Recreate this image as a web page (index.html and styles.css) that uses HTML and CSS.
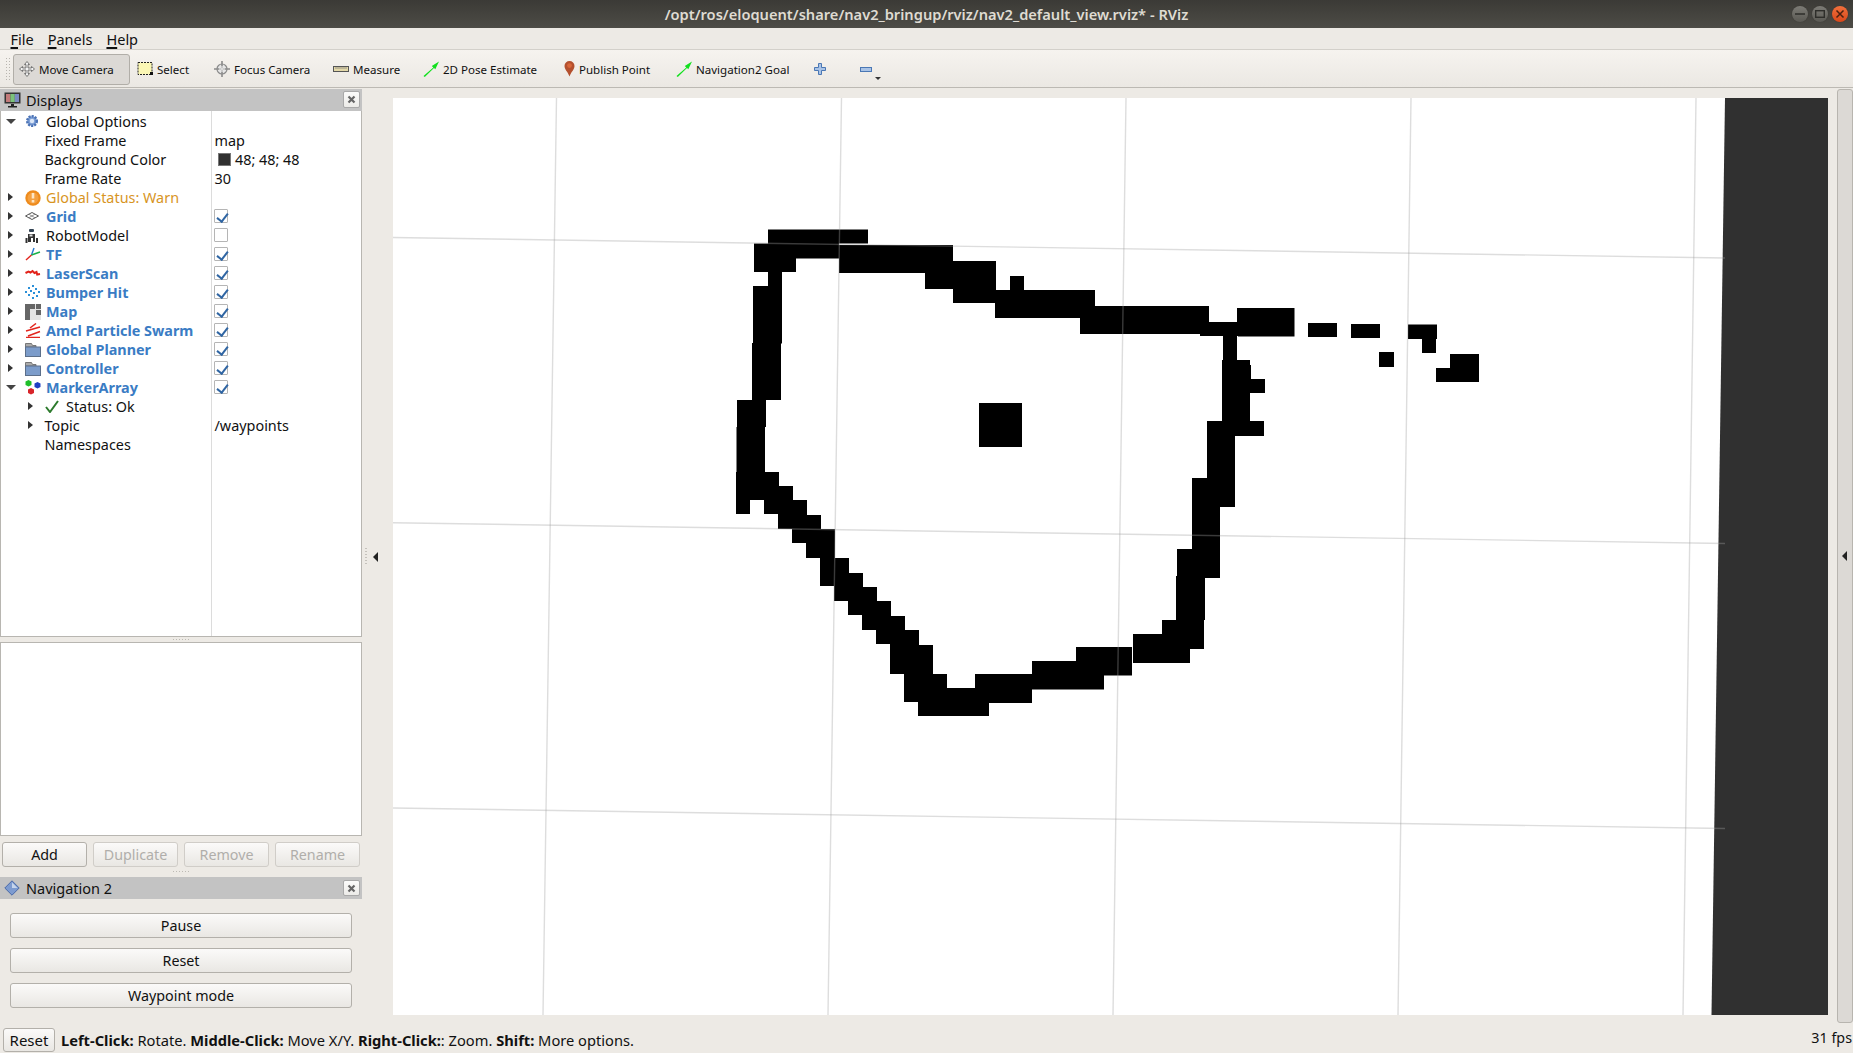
FILE: index.html
```html
<!DOCTYPE html>
<html lang="en">
<head>
<meta charset="utf-8">
<title>RViz</title>
<link rel="stylesheet" href="styles.css">
</head>
<body>
<div class="app">
  <header class="titlebar">
    <span class="title">/opt/ros/eloquent/share/nav2_bringup/rviz/nav2_default_view.rviz* - RViz</span>
    <div class="winbtns">
      <span class="winbtn"><svg width="10" height="10" viewBox="0 0 10 10"><path d="M0 5h10" stroke="#2e2e2a" stroke-width="1.5"/></svg></span>
      <span class="winbtn"><svg width="10" height="10" viewBox="0 0 10 10"><rect x=".7" y="1.7" width="8.6" height="6.6" fill="none" stroke="#2e2e2a" stroke-width="1.4"/></svg></span>
      <span class="winbtn close"><svg width="10" height="10" viewBox="0 0 10 10"><path d="M1.5 1.5l7 7M8.5 1.5l-7 7" stroke="#4a2010" stroke-width="1.5"/></svg></span>
    </div>
  </header>
  <nav class="menubar">
    <span class="menu"><u>F</u>ile</span>
    <span class="menu"><u>P</u>anels</span>
    <span class="menu"><u>H</u>elp</span>
  </nav>
  <div class="toolbar">
    <span class="grip"></span>
    <span class="tool active"><svg class="ti" width="16" height="16" viewBox="0 0 16 16"><path d="M8 .5l2.500 3H9v3.500h3.500V5.500l3 2.500-3 2.500V9H9v3.500h1.500L8 15.500l-2.500-3H7V9H3.500v1.500l-3-2.500 3-2.500V7H7V3.500H5.500z" fill="#f4f4f4" stroke="#6a6a6a" stroke-width=".9"/></svg>Move Camera</span>
    <span class="tool t-select"><svg class="ti" width="16" height="16" viewBox="0 0 16 16"><rect x="1" y="1.500" width="14" height="12" fill="#fbf7b5" stroke="#222" stroke-dasharray="2 1"/><rect x="13" y="11" width="3" height="3" fill="#111"/></svg>Select</span>
    <span class="tool t-focus"><svg class="ti" width="16" height="16" viewBox="0 0 16 16"><circle cx="8" cy="8" r="5" fill="#e6e6e6" stroke="#8a8a8a" stroke-width="1.200"/><path d="M8 0v16M0 8h16" stroke="#8a8a8a" stroke-width="1.600"/><path d="M8 5v6M5 8h6" stroke="#f4f4f4"/></svg>Focus Camera</span>
    <span class="tool t-measure"><svg class="ti" width="16" height="16" viewBox="0 0 16 16"><rect x=".5" y="5.500" width="15" height="5" fill="#e3d8a8" stroke="#555"/><path d="M3 6v2M5 6v2M7 6v2M9 6v2M11 6v2M13 6v2" stroke="#777" stroke-width=".7"/></svg>Measure</span>
    <span class="tool t-pose"><svg class="ti" width="16" height="16" viewBox="0 0 16 16"><path d="M.5 15L10.300 6.600 8.800 5 16 .5 12.300 8.200 11 6.900 1.800 16z" fill="#12e01e"/></svg>2D Pose Estimate</span>
    <span class="tool t-point"><svg class="ti" width="11" height="16" viewBox="0 0 11 16"><path d="M5.500 15.500C4 11 .5 8.500 .5 5a5 5 0 0 1 10 0c0 3.500-3.500 6-5 10.500z" fill="#b4502e"/><circle cx="5.500" cy="4.600" r="2.400" fill="#d9663a"/></svg>Publish Point</span>
    <span class="tool t-goal"><svg class="ti" width="16" height="16" viewBox="0 0 16 16"><path d="M.5 15L10.300 6.600 8.800 5 16 .5 12.300 8.200 11 6.900 1.800 16z" fill="#12e01e"/></svg>Navigation2 Goal</span>
    <span class="tool t-plus"><svg width="12" height="12" viewBox="0 0 12 12"><path d="M4.500.5h3v4h4v3h-4v4h-3v-4h-4v-3h4z" fill="#a9c3e6" stroke="#4a77b4"/></svg></span>
    <span class="tool t-minus"><svg width="12" height="5" viewBox="0 0 12 5"><rect x=".5" y=".5" width="11" height="4" fill="#a9c3e6" stroke="#4a77b4"/></svg><span class="caret"></span></span>
  </div>

  <div class="main">
    <aside class="dock">
      <div class="panelhead">
        <svg class="headicon" width="17" height="16" viewBox="0 0 17 16"><rect x=".5" y=".5" width="16" height="11" fill="#333"/><rect x="2" y="2" width="4.400" height="8" fill="#c27a7a"/><rect x="6.400" y="2" width="4.400" height="8" fill="#7ac27a"/><rect x="10.800" y="2" width="4.200" height="8" fill="#7a8ac2"/><path d="M7 12h3v2h3v1.500H4V14h3z" fill="#222"/></svg>
        <span class="headtext">Displays</span>
        <span class="headclose"><svg width="9" height="9" viewBox="0 0 9 9"><path d="M1.500 1.500l6 6M7.500 1.500l-6 6" stroke="#666" stroke-width="2.200"/></svg></span>
      </div>
      <div class="tree">
        <div class="row"><span class="arrow down"></span><svg class="ico" width="14" height="14" viewBox="0 0 14 14"><circle cx="7" cy="7" r="4.800" fill="#7d9fd6" stroke="#4a72b5" stroke-width="2.500" stroke-dasharray="2 1.100"/><circle cx="7" cy="7" r="2.200" fill="#dbe6f6"/></svg><span class="lbl">Global Options</span></div>
        <div class="row"><span class="lbl sub">Fixed Frame</span><span class="val">map</span></div>
        <div class="row"><span class="lbl sub">Background Color</span><span class="val"><span class="swatch"></span>48; 48; 48</span></div>
        <div class="row"><span class="lbl sub">Frame Rate</span><span class="val">30</span></div>
        <div class="row"><span class="arrow"></span><svg class="ico" width="16" height="16" viewBox="0 0 16 16"><circle cx="8" cy="8" r="7.700" fill="#ee8b1c"/><circle cx="8" cy="8" r="5.500" fill="#f4a040"/><path d="M6.700 3h2.600v5.500H6.700zM6.700 10h2.600v2.400H6.700z" fill="#fde6c6"/></svg><span class="lbl warn">Global Status: Warn</span></div>
        <div class="row"><span class="arrow"></span><svg class="ico" width="14" height="14" viewBox="0 0 14 14"><path d="M7 3.500L13.500 7 7 10.500.5 7z" fill="none" stroke="#555"/><path d="M3.800 5.200L10 8.800M10 5.200L3.800 8.800" stroke="#777" stroke-width=".8"/></svg><span class="lbl on">Grid</span><span class="check yes"></span></div>
        <div class="row"><span class="arrow"></span><svg class="ico" width="15" height="16" viewBox="0 0 15 16"><rect x="4" y="1" width="5" height="3" rx="1" fill="#345"/><path d="M3 6h7v8H8v-4H6v4H3zM11 10h2v5h-2zM.5 10h2v5h-2z" fill="#333"/><rect x="4.500" y="6.500" width="3" height="2" fill="#ddd"/></svg><span class="lbl">RobotModel</span><span class="check"></span></div>
        <div class="row"><span class="arrow"></span><svg class="ico" width="16" height="14" viewBox="0 0 16 14"><path d="M6.500 8L9 1" stroke="#2a7ad0" stroke-width="1.400" fill="none"/><path d="M6.500 8L15 5" stroke="#19b24a" stroke-width="1.400" fill="none"/><path d="M6.500 8L1 13" stroke="#e2261e" stroke-width="1.400" fill="none"/></svg><span class="lbl on">TF</span><span class="check yes"></span></div>
        <div class="row"><span class="arrow"></span><svg class="ico" width="16" height="14" viewBox="0 0 16 14"><path d="M.5 7l3-1.500 2 1 2-1.500 2 2 2-1 .7 2.500 2.800-.5" fill="none" stroke="#e2221a" stroke-width="2"/></svg><span class="lbl on">LaserScan</span><span class="check yes"></span></div>
        <div class="row"><span class="arrow"></span><svg class="ico" width="16" height="14" viewBox="0 0 16 14" fill="#2a8fd8"><rect x="7" y="0" width="2" height="2"/><rect x="3" y="2" width="2" height="2"/><rect x="10" y="3" width="2" height="2"/><rect x="0" y="6" width="2" height="2"/><rect x="5" y="5" width="2" height="2"/><rect x="13" y="6" width="2" height="2"/><rect x="8" y="7" width="2" height="2"/><rect x="3" y="9" width="2" height="2"/><rect x="11" y="10" width="2" height="2"/><rect x="7" y="12" width="2" height="2"/></svg><span class="lbl on">Bumper Hit</span><span class="check yes"></span></div>
        <div class="row"><span class="arrow"></span><svg class="ico" width="16" height="16" viewBox="0 0 16 16"><rect width="16" height="16" fill="#e4e4e4"/><path d="M0 0h10v5H5v11H0zM11 0h5v5h-5zM11 6h5v5h-5z" fill="#666"/></svg><span class="lbl on">Map</span><span class="check yes"></span></div>
        <div class="row"><span class="arrow"></span><svg class="ico" width="16" height="15" viewBox="0 0 16 15" fill="none" stroke="#e2261e" stroke-width="1.500"><path d="M5 5L11 .5 M1 8L15 4 M3 13L15 8.500 M1 14.500H15"/></svg><span class="lbl on">Amcl Particle Swarm</span><span class="check yes"></span></div>
        <div class="row"><span class="arrow"></span><svg class="ico" width="16" height="15" viewBox="0 0 16 15"><path d="M.5 1.500h6l1 2H11V5H.5z" fill="#aaa" stroke="#777"/><rect x=".5" y="5" width="15" height="9.500" fill="#7c9cca" stroke="#5c6f8a"/></svg><span class="lbl on">Global Planner</span><span class="check yes"></span></div>
        <div class="row"><span class="arrow"></span><svg class="ico" width="16" height="15" viewBox="0 0 16 15"><path d="M.5 1.500h6l1 2H11V5H.5z" fill="#aaa" stroke="#777"/><rect x=".5" y="5" width="15" height="9.500" fill="#7c9cca" stroke="#5c6f8a"/></svg><span class="lbl on">Controller</span><span class="check yes"></span></div>
        <div class="row"><span class="arrow down"></span><svg class="ico" width="16" height="16" viewBox="0 0 16 16"><path d="M3.500 0l3 1.500v3.500l-3 1.500-3-1.500V1.500z" fill="#1fbf2a"/><path d="M12.500 2l3 1.500V7l-3 1.500-3-1.500V3.500z" fill="#1f3fc4"/><path d="M6 8l3 1.500V13l-3 1.500L3 13V9.500z" fill="#d8242a"/></svg><span class="lbl on">MarkerArray</span><span class="check yes"></span></div>
        <div class="row"><span class="arrow nested"></span><svg class="ico okico" width="14" height="13" viewBox="0 0 14 13"><path d="M1 7l4 5 8-11" fill="none" stroke="#2c7a2c" stroke-width="2"/></svg><span class="lbl">Status: Ok</span></div>
        <div class="row"><span class="arrow nested"></span><span class="lbl topic">Topic</span><span class="val">/waypoints</span></div>
        <div class="row"><span class="lbl sub">Namespaces</span></div>
        <span class="colsep"></span>
      </div>
      <div class="splitter"><span class="dots"></span></div>
      <div class="blank"></div>
      <div class="btnrow">
        <span class="btn">Add</span>
        <span class="btn off">Duplicate</span>
        <span class="btn off">Remove</span>
        <span class="btn off">Rename</span>
      </div>
      <div class="splitter low"><span class="dots"></span></div>
      <div class="panelhead nav">
        <svg class="headicon" width="16" height="16" viewBox="0 0 16 16"><path d="M8 .8L15.200 8 8 15.200 .8 8z" fill="#7d9bd0" stroke="#4a6aa8"/><path d="M8 2.500L13.500 8H8z" fill="#c6d5ec"/></svg>
        <span class="headtext">Navigation 2</span>
        <span class="headclose"><svg width="9" height="9" viewBox="0 0 9 9"><path d="M1.500 1.500l6 6M7.500 1.500l-6 6" stroke="#666" stroke-width="2.200"/></svg></span>
      </div>
      <div class="navbody">
        <span class="btn wide">Pause</span>
        <span class="btn wide">Reset</span>
        <span class="btn wide">Waypoint mode</span>
      </div>
    </aside>
    <div class="handle"><span class="vdots"></span><span class="larr"></span></div>
    <div class="viewwrap">
      <svg class="view" width="1435" height="917" viewBox="393 98 1435 917">
        <rect x="393" y="98" width="1435" height="917" fill="#fff"/>
        <path class="bg" d="M1725 98H1828V1015H1711.500z"/>
        <path class="map" d="M768 229.500h100v14h-100zM754 243.500h42v28.500h-42zM796 243.500h43v15h-43zM839 245h114v28h-114zM925 261h71v28h-71zM953 261h43v42h-43zM1010 276h14v14h-14zM995 290h100v28h-100zM1080 306h129v28h-129zM1201 322h49v14h-49zM1237 308h13v14h-13zM1200 307h9v15h-9zM1200 322h38v14h-38zM1238 308h56.500v28.500h-56.500zM1223 336h14v24h-14zM1222 365h29v28h-29zM1222 360h28v61h-28zM1251 379h14v14h-14zM1207 421h57v15h-57zM1207 436h28v42h-28zM1192 478h43v29h-43zM1192 507h28v42h-28zM1177 549h43v29h-43zM1176 576h29v44h-29zM1162 620h42v29h-42zM1133 634h57v29h-57zM1076 647h56v28.500h-56zM1032 661h72v28.500h-72zM975 674h57v29h-57zM918 688h71v28h-71zM904 674h43v28h-43zM890 645h43v29h-43zM890 630h29v43h-29zM876 616h29v28h-29zM862 601h29v29h-29zM848 587h29v28h-29zM835 573h28v28h-28zM834 558h15v43h-15zM820 558h15v28h-15zM806 543h29v15h-29zM792 529h43v14h-43zM778 515h43v14h-43zM778 500h29v28.500h-29zM764 486h29v28h-29zM736 472h43v28h-43zM736 500h14v14h-14zM736.500 427h28.500v45h-28.500zM737 400h29v27h-29zM752 343h29v57h-29zM753 286h29v57.500h-29zM768 272h14v14h-14zM1308 323h29v14h-29zM1351 324h29v14h-29zM1379 352h15v15h-15zM1408 324.500h29v14.500h-29zM1422 339h14v14h-14zM1450 354h29v28h-29zM1436 368h43v14h-43zM979 403h43v44h-43z"/>
        <g class="grid">
          <path d="M556.500 98L543 1015M841.500 98L828 1015M1126 98L1113 1015M1411 98L1398 1015M1696 98L1683 1015"/>
          <path d="M393 237.500L1725 258M393 522.700L1725 543.500M393 808L1725 828.500"/>
        </g>
      </svg>
    </div>
    <div class="rhandle"><span class="rarr"></span></div>
  </div>

  <footer class="status">
    <span class="btn small">Reset</span>
    <span class="hint"><b>Left-Click:</b> Rotate. <b>Middle-Click:</b> Move X/Y. <b>Right-Click:</b>: Zoom. <b>Shift:</b> More options.</span>
    <span class="fps">31 fps</span>
  </footer>
</div>
</body>
</html>
```
FILE: styles.css
```css
* { box-sizing: border-box; }
html, body { margin: 0; padding: 0; height: 100%; overflow: hidden; }
body { font-family: "Noto Sans", "Open Sans", sans-serif; color: #111; background: #edeae5; font-size: 14px; }
.app { display: flex; flex-direction: column; width: 1853px; height: 1053px; }

.titlebar { position: relative; height: 28px; flex: none; display: flex; align-items: center; justify-content: center; background: linear-gradient(#3b3a36, #4d4c46); }
.title { color: #dfdbd2; font-size: 14.65px; font-weight: 600; }
.winbtns { position: absolute; right: 5px; top: 6px; display: flex; gap: 4px; }
.winbtn { width: 16px; height: 16px; border-radius: 50%; background: linear-gradient(#7c7b75, #5a5953); display: flex; align-items: center; justify-content: center; box-shadow: 0 0 1px #2c2b28; }
.winbtn.close { background: linear-gradient(#f0703c, #d9481a); }

.menubar { height: 22px; flex: none; display: flex; align-items: center; gap: 14px; padding-left: 10.500px; background: #edeae5; border-bottom: 1px solid #d3d0ca; font-size: 14.500px; }
.menu u { text-decoration-thickness: 2px; text-underline-offset: 2px; }

.toolbar { height: 38px; flex: none; display: flex; align-items: center; background: linear-gradient(#f6f3ef, #ebe8e3); border-bottom: 1px solid #bcb9b3; font-size: 11.550px; padding: 1px 0 0 5px; }
.grip { width: 5px; height: 24px; margin-right: 3px; background-image: radial-gradient(#b8b5af 40%, transparent 45%); background-size: 3px 3px; }
.tool { display: flex; align-items: center; height: 31px; white-space: nowrap; }
.ti { margin-right: 4px; flex: none; }
.tool.active { width: 117px; padding-left: 5px; margin-right: 7px; background: #dcd9d5; border: 1px solid #b1aea8; border-radius: 3px; }
.t-select { width: 77px; }
.t-focus { width: 119px; }
.t-measure { width: 90px; }
.t-pose { width: 141px; }
.t-point { width: 112px; }
.t-goal { width: 138px; }
.t-plus { width: 46px; }
.t-minus { position: relative; }
.caret { position: absolute; left: 15px; top: 23px; width: 0; height: 0; border: 3px solid transparent; border-top: 3px solid #333; }

.main { flex: 1; min-height: 0; display: flex; }
.dock { width: 362px; flex: none; display: flex; flex-direction: column; padding-top: 1px; }
.panelhead { height: 22px; flex: none; display: flex; align-items: center; background: #c3c3c3; padding-left: 4px; position: relative; }
.headicon { flex: none; margin-right: 5px; }
.nav .headicon { margin-right: 6px; }
.headtext { font-size: 14.500px; }
.headclose { position: absolute; right: 2px; top: 2px; width: 17px; height: 17px; background: linear-gradient(#fbfbfa, #ecebe8); border: 1px solid #a9a9a9; border-radius: 2px; display: flex; align-items: center; justify-content: center; }
.nav .headclose { top: 3px; height: 16px; }

.tree { height: 526px; flex: none; background: #fff; border: 1px solid #b8b6b1; border-top: 0; position: relative; padding-top: 1px; font-size: 14.400px; }
.colsep { position: absolute; left: 210px; top: 0; bottom: 0; width: 1px; background: #dcdcdc; }
.row { height: 19px; display: flex; align-items: center; position: relative; white-space: nowrap; }
.arrow { position: absolute; left: 7px; top: 5px; width: 0; height: 0; border: 4.500px solid transparent; border-left: 5px solid #333; border-right: 0; }
.arrow.down { left: 5px; top: 7px; border: 5px solid transparent; border-top: 5px solid #444; border-bottom: 0; border-left-width: 5px; border-right-width: 5px; }
.arrow.nested { left: 26.500px; }
.ico { position: absolute; left: 24px; top: 2px; }
.okico { left: 44px; top: 3px; }
.lbl { position: absolute; left: 45px; line-height: 19px; }
.lbl.sub { left: 43.500px; }
.lbl.topic { left: 43.500px; }
.okico + .lbl { left: 65px; }
.lbl.on { font-weight: 700; color: #3a7cc4; }
.lbl.warn { color: #d8951f; }
.val { position: absolute; left: 213.500px; line-height: 19px; display: flex; align-items: center; }
.swatch { width: 13px; height: 13px; background: #303030; border: 1px solid #777; margin: 0 4px 0 3.500px; }
.check { position: absolute; left: 213px; top: 2px; width: 14px; height: 14px; border: 1px solid #b5b5b5; border-radius: 1px; background: #fff; }
.check.yes::after { content: ""; position: absolute; left: 3.500px; top: 1px; width: 5px; height: 9px; border: solid #2f65a3; border-width: 0 2px 2px 0; transform: rotate(38deg); }

.splitter { height: 5px; flex: none; display: flex; justify-content: center; align-items: center; }
.splitter.low { height: 10px; }
.dots { width: 16px; height: 2px; background-image: linear-gradient(90deg, #bdbab4 50%, transparent 50%); background-size: 3px 1px; background-repeat: repeat-x; }
.blank { height: 194px; flex: none; background: #fff; border: 1px solid #b8b6b1; }
.btnrow { display: flex; gap: 6px; padding: 6px 2px 0; flex: none; }
.btn { display: flex; align-items: center; justify-content: center; height: 25px; background: linear-gradient(#fbfaf9, #e9e7e3); border: 1px solid #b3b0aa; border-radius: 3px; font-size: 14.300px; }
.btnrow .btn { flex: 1; }
.btn.off { color: #b0aeaa; border-color: #d0cdc8; }
.navbody { display: flex; flex-direction: column; gap: 10px; padding: 14px 10px 0; flex: none; }
.btn.wide { width: 342px; }

.handle { width: 31px; flex: none; display: flex; align-items: center; gap: 6px; padding-left: 3px; padding-top: 1px; }
.vdots { width: 2px; height: 17px; background-image: linear-gradient(#c4c1bb 50%, transparent 50%); background-size: 2px 3px; }
.larr { width: 0; height: 0; border: 5px solid transparent; border-right: 5px solid #222; border-left: 0; }
.viewwrap { width: 1435px; flex: none; padding-top: 10px; }
.view { display: block; }
.bg { fill: #303030; }
.map { fill: #000; }
.grid path { fill: none; stroke: #a0a0a0; stroke-opacity: .36; stroke-width: 1.4; }
.rhandle { margin: 1px 0 1px 9px; width: 16px; flex: none; background: #dcd9d5; border: 1px solid #b8b5af; border-radius: 3px; display: flex; align-items: center; padding-left: 4px; }
.rarr { width: 0; height: 0; border: 5px solid transparent; border-right: 5px solid #222; border-left: 0; }

.status { height: 29px; flex: none; display: flex; align-items: center; padding: 3px 1px 0 3px; }
.btn.small { width: 52px; height: 24px; margin-right: 6px; font-size: 15px; }
.hint { font-size: 14.660px; flex: 1; white-space: nowrap; }
.fps { font-size: 14.300px; margin-bottom: 5px; }
```
